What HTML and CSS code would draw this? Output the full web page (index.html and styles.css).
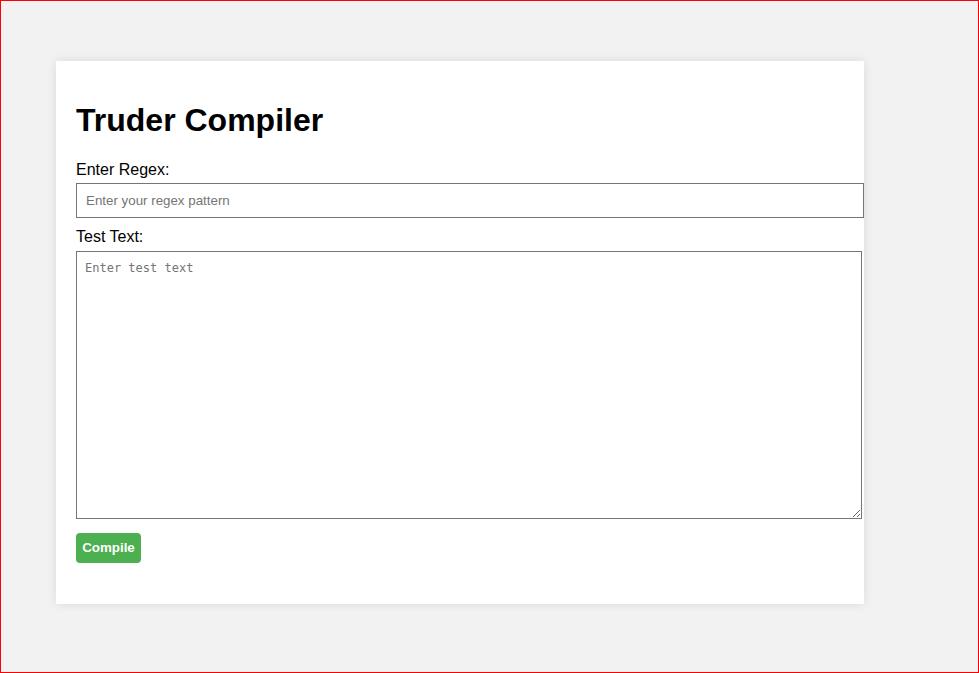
FILE: index.html
```html
<!DOCTYPE html>
<html>
<head>
<meta charset="utf-8">
<title>Truder Compiler</title>
<link rel="stylesheet" href="styles.css">
</head>
<body>
<div class="container">
  <h1>Truder Compiler</h1>
  <label class="label" for="regex">Enter Regex:</label>
  <input class="field" id="regex" type="text" placeholder="Enter your regex pattern">
  <label class="label label-area" for="text">Test Text:</label>
  <textarea class="area" id="text" placeholder="Enter test text"></textarea>
  <button class="btn">Compile</button>
  <div class="result"></div>
</div>
</body>
</html>
```

FILE: styles.css
```css
html, body {
  margin: 0;
  padding: 0;
}
body {
  background: #f2f2f2;
  font-family: "Liberation Sans", Arial, sans-serif;
  border: 1px solid #ff0000;
  height: 673px;
  box-sizing: border-box;
  overflow: hidden;
}
.container {
  width: 768px;
  padding: 20px;
  margin: 60px 0 0 55px;
  background: #ffffff;
  box-shadow: 0 0 10px rgba(0, 0, 0, 0.1);
}
h1 {
  font-size: 32px;
  font-weight: bold;
  margin: 21.44px 0;
  color: #000;
}
.label {
  display: block;
  font-size: 16px;
  color: #000;
  margin-bottom: 4px;
}
.label-area {
  margin-bottom: 5px;
}
.field {
  display: block;
  width: 788px;
  height: 35px;
  box-sizing: border-box;
  padding: 0 9px;
  border: 1px solid #767676;
  border-radius: 0;
  font-family: "Liberation Sans", Arial, sans-serif;
  font-size: 13.33px;
  margin: 0 0 10px 0;
  outline: none;
}
.field::placeholder {
  color: #757575;
}
.area {
  display: block;
  width: 786px;
  height: 268px;
  box-sizing: border-box;
  padding: 9px 8px 8px;
  border: 1px solid #767676;
  border-radius: 0;
  font-family: "DejaVu Sans Mono", "Liberation Mono", monospace;
  font-size: 12px;
  margin: 0 0 14px 0;
  resize: both;
}
.area::placeholder {
  color: #757575;
}
.btn {
  display: block;
  width: 65px;
  height: 30px;
  background: #4caf50;
  color: #ffffff;
  border: none;
  border-radius: 4px;
  font-family: "Liberation Sans", Arial, sans-serif;
  font-size: 13.33px;
  font-weight: bold;
  padding: 0;
  cursor: pointer;
}
.result {
  margin-top: 21px;
}
```
